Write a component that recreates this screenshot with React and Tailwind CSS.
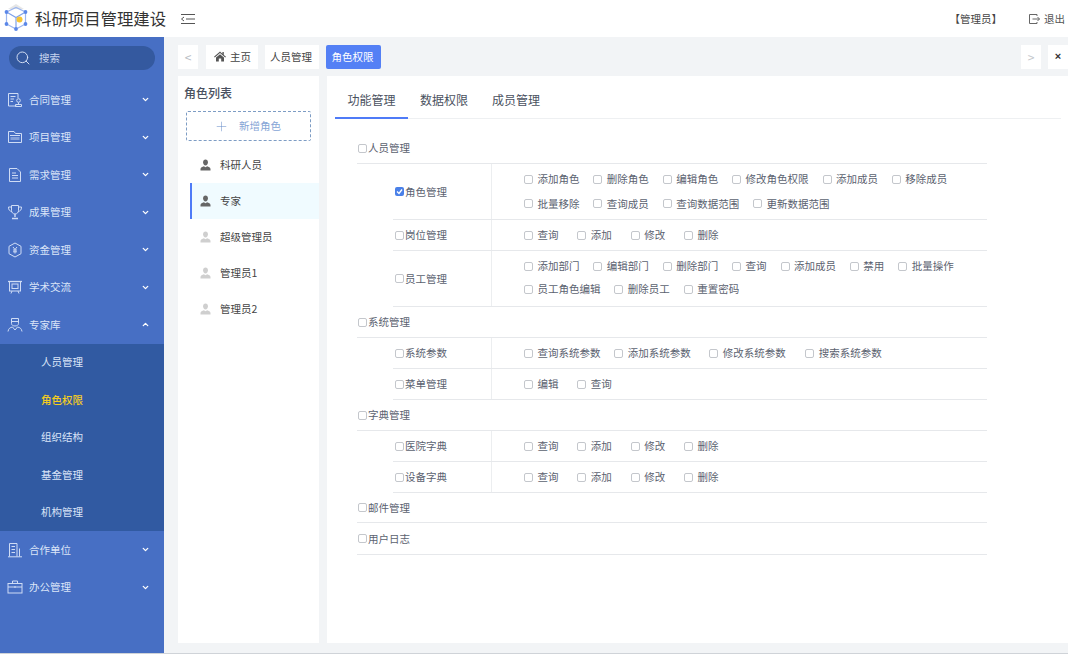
import React from 'react';
import { Search, ChevronDown, ChevronUp, Plus } from 'lucide-react';

const Stroke = ({ children }) => (
  <svg width="16" height="16" viewBox="0 0 16 16" fill="none" stroke="#cfdcf5" strokeWidth="1" className="shrink-0">
    {children}
  </svg>
);

const ContractIcon = () => (
  <Stroke>
    <path d="M9.5 14H1.5V1.5H11V6" />
    <path d="M3.5 4.5H8.5M3.5 7H7M3.5 9.5H6" />
    <circle cx="11.5" cy="8.5" r="1.8" />
    <path d="M11.5 10.5V12M8.5 14.5V12.5H14.5V14.5H8.5Z" />
  </Stroke>
);
const ProjectIcon = () => (
  <Stroke>
    <path d="M1.5 13.5V2.5H7L8.5 4.5H14.5V13.5H1.5Z" />
    <path d="M3 6.5H13" />
    <rect x="3.5" y="8" width="9" height="3" fill="#cfdcf5" fillOpacity="0.45" stroke="none" />
  </Stroke>
);
const DocIcon = () => (
  <Stroke>
    <path d="M2.5 1.5H10L13.5 5V14.5H2.5V1.5Z" />
    <path d="M5 6H9M5 8.5H11M5 11H11" />
  </Stroke>
);
const TrophyIcon = () => (
  <Stroke>
    <path d="M4.5 1.5H11.5V6.5C11.5 8.5 10 10 8 10C6 10 4.5 8.5 4.5 6.5V1.5Z" />
    <path d="M4.5 3H1.5C1.5 6 2.5 7 5 7.5M11.5 3H14.5C14.5 6 13.5 7 11 7.5" />
    <path d="M8 10V13M5 14.5H11" strokeWidth="1.4" />
  </Stroke>
);
const MoneyIcon = () => (
  <Stroke>
    <path d="M8 1L14 4.3V11.7L8 15L2 11.7V4.3L8 1Z" />
    <path d="M6 5L8 7.5L10 5M8 7.5V11.5M6 8H10M6 9.8H10" />
  </Stroke>
);
const BoardIcon = () => (
  <Stroke>
    <path d="M1 2.5H15" strokeWidth="1.3" />
    <rect x="2.5" y="2.5" width="11" height="9.5" />
    <rect x="5" y="5" width="6" height="4.5" />
    <path d="M5 12L4 14.5M11 12L12 14.5" />
  </Stroke>
);
const ExpertIcon = () => (
  <Stroke>
    <path d="M4.5 1.5H11.5V6.5C11.5 8 10 9 8 9C6 9 4.5 8 4.5 6.5V1.5Z" />
    <path d="M4.5 4.5H11.5" />
    <path d="M1 14.5C1.5 11.5 3 10.5 5.5 10L8 13L10.5 10C13 10.5 14.5 11.5 15 14.5" />
  </Stroke>
);
const BuildingIcon = () => (
  <Stroke>
    <path d="M2.5 14.5V1.5H10V14.5" />
    <path d="M4.5 4.5H8M4.5 7.5H8M4.5 10.5H8" />
    <path d="M12.5 6.5V14.5" />
    <path d="M1 14.8H15" />
  </Stroke>
);
const CaseIcon = () => (
  <Stroke>
    <rect x="1" y="4.5" width="14" height="9.5" />
    <path d="M5.5 4.5V2H10.5V4.5M1 8H15M8 7V9" />
  </Stroke>
);

const Logo = () => (
  <svg width="26" height="30" viewBox="0 0 26 30" className="shrink-0">
    <path d="M13 0L21 5H5L13 0Z" fill="#e6e6e6" />
    <path d="M3.5 8L13 3.5L22.5 8V20L13 25L3.5 20V8Z" fill="none" stroke="#9db7ef" strokeWidth="1.2" />
    <path d="M3.5 8L13 13.5L22.5 8M13 13.5V25" fill="none" stroke="#7fa2ea" strokeWidth="1.2" />
    <circle cx="16.5" cy="15.5" r="3" fill="#f6c433" />
    <circle cx="3.5" cy="8" r="1.9" fill="#5b87e8" />
    <circle cx="22.5" cy="8" r="1.9" fill="#5b87e8" />
    <circle cx="3.5" cy="20" r="1.9" fill="#5b87e8" />
    <circle cx="22.5" cy="20" r="1.9" fill="#5b87e8" />
    <circle cx="13" cy="25" r="1.9" fill="#5b87e8" />
  </svg>
);

const CollapseIcon = () => (
  <svg width="16" height="12" viewBox="0 0 16 12" fill="none" stroke="#555" strokeWidth="1">
    <path d="M1 1.5H15M6 6H15M1 10.5H15" />
    <path d="M4 4L1.5 6L4 8" />
  </svg>
);

const ExitIcon = () => (
  <svg width="12" height="12" viewBox="0 0 12 12" fill="none" stroke="#666" strokeWidth="1" className="shrink-0">
    <path d="M9 3V1.5H1.5V10.5H9V9" />
    <path d="M4.5 6H11.5M9.5 4L11.5 6L9.5 8" />
  </svg>
);

const HomeIcon = () => (
  <svg width="12" height="11" viewBox="0 0 12 11" fill="#555" className="shrink-0">
    <path d="M6 0.5L0 5.8L0.8 6.6L6 2L11.2 6.6L12 5.8L9.8 3.9V1H8.4V2.7L6 0.5Z" />
    <path d="M2 6.6L6 3.2L10 6.6V10.5H7.2V7.5H4.8V10.5H2V6.6Z" />
  </svg>
);

const PersonIcon = ({ color }) => (
  <svg width="11" height="12" viewBox="0 0 11 12" fill={color} className="shrink-0">
    <path d="M5.5 0.5C7 0.5 7.9 1.6 7.9 3.2C7.9 4.9 6.9 6.4 5.5 6.4C4.1 6.4 3.1 4.9 3.1 3.2C3.1 1.6 4 0.5 5.5 0.5Z" />
    <path d="M0.5 11.5V10C0.5 8.6 2.3 7.8 3.9 7.2L5.5 8.2L7.1 7.2C8.7 7.8 10.5 8.6 10.5 10V11.5H0.5Z" />
  </svg>
);

const menuBefore = [
  ['合同管理', ContractIcon],
  ['项目管理', ProjectIcon],
  ['需求管理', DocIcon],
  ['成果管理', TrophyIcon],
  ['资金管理', MoneyIcon],
  ['学术交流', BoardIcon],
];
const subMenu = ['人员管理', '角色权限', '组织结构', '基金管理', '机构管理'];
const menuAfter = [
  ['合作单位', BuildingIcon],
  ['办公管理', CaseIcon],
];

const MenuRow = ({ label, Icon, open }) => (
  <div className="flex h-[37.5px] items-center pl-[7px] pr-[14px] text-[10.5px] text-[#dbe5f8]">
    <Icon />
    <span className="ml-[6px] flex-1">{label}</span>
    {open ? <ChevronUp size={9} strokeWidth={3.5} color="#fff" /> : <ChevronDown size={9} strokeWidth={3.5} color="#fff" />}
  </div>
);

const Sidebar = () => (
  <aside className="flex w-[164px] shrink-0 flex-col bg-[#476fc4]">
    <div className="px-[9px] pt-[9px] pb-[11px]">
      <div className="flex h-[24px] items-center rounded-full bg-[#34599f] pl-[6px] text-[10.5px] text-[#c6d4ee]">
        <Search size={16} strokeWidth={1.4} color="#dbe5f8" />
        <span className="ml-[8px]">搜索</span>
      </div>
    </div>
    {menuBefore.map(([label, Icon]) => (
      <MenuRow key={label} label={label} Icon={Icon} />
    ))}
    <MenuRow label="专家库" Icon={ExpertIcon} open />
    <div className="bg-[#315aa2]">
      {subMenu.map((s) => (
        <div
          key={s}
          className={`flex h-[37.5px] items-center pl-[41px] text-[10.5px] ${s === '角色权限' ? 'font-medium text-[#f5cd1f]' : 'text-[#dbe5f8]'}`}
        >
          {s}
        </div>
      ))}
    </div>
    {menuAfter.map(([label, Icon]) => (
      <MenuRow key={label} label={label} Icon={Icon} />
    ))}
  </aside>
);

const Tab = ({ children, className = '' }) => (
  <div className={`flex h-[24px] items-center justify-center whitespace-nowrap text-[10.5px] ${className}`}>{children}</div>
);

const TabBar = () => (
  <div className="flex h-[39px] shrink-0 items-center bg-[#f2f4f6] pl-[14px]">
    <Tab className="w-[20px] bg-white text-[12px] text-[#b9bdc4]">&lt;</Tab>
    <Tab className="ml-[8px] w-[52px] gap-[4px] bg-white pl-px text-[#444]">
      <HomeIcon />
      主页
    </Tab>
    <Tab className="ml-[7px] w-[54px] bg-white pr-[2px] text-[#444]">人员管理</Tab>
    <Tab className="ml-[7px] w-[55px] rounded-[2px] bg-[#5480f5] pr-[2px] text-white">角色权限</Tab>
    <div className="flex-1" />
    <Tab className="w-[20px] bg-white text-[12px] text-[#c4c7cc]">&gt;</Tab>
    <Tab className="ml-[7px] w-[20px] bg-white font-['Liberation_Sans'] text-[11px] font-bold text-[#333]">×</Tab>
  </div>
);

const roles = [
  ['科研人员', '#666', false],
  ['专家', '#666', true],
  ['超级管理员', '#cfcfcf', false],
  ['管理员1', '#cfcfcf', false],
  ['管理员2', '#cfcfcf', false],
];

const RolePanel = () => (
  <section className="flex w-[141px] shrink-0 flex-col bg-white">
    <h2 className="pl-[6px] pt-[8px] text-[12px] leading-[17px] font-medium text-[#4a5160]">角色列表</h2>
    <div className="mx-[8px] mt-[10px] flex h-[30px] items-center justify-center rounded-[2px] border border-dashed border-[#7d9cc4] pr-[2px] text-[10.5px] text-[#86a5d6]">
      <Plus size={15} strokeWidth={0.9} color="#6f93cc" />
      <span className="ml-[10px]">新增角色</span>
    </div>
    <div className="mt-[6px] pl-[12px]">
      {roles.map(([name, color, active]) => (
        <div
          key={name}
          className={`flex h-[36px] items-center border-l-2 pb-px pl-[8px] text-[10.5px] text-[#444] ${active ? 'border-[#4f7bf7] bg-[#f0fbff]' : 'border-transparent'}`}
        >
          <PersonIcon color={color} />
          <span className="ml-[9px]">{name}</span>
        </div>
      ))}
    </div>
  </section>
);

const Box = ({ checked }) =>
  checked ? (
    <span className="flex h-[9px] w-[9px] shrink-0 items-center justify-center rounded-[2px] bg-[#4a80e8]">
      <svg width="7" height="7" viewBox="0 0 7 7" fill="none" stroke="#fff" strokeWidth="1.3">
        <path d="M1 3.5L3 5.5L6 1.5" />
      </svg>
    </span>
  ) : (
    <span className="h-[9px] w-[9px] shrink-0 rounded-[2px] border border-[#c4c7cc] bg-white" />
  );

const Perm = ({ label, gap }) => (
  <span className={`flex items-center ${gap}`}>
    <Box />
    <span className="ml-[4.4px] text-[10.5px] leading-[14px] text-[#5b6270]">{label}</span>
  </span>
);

const Label = ({ text, checked }) => (
  <span className="flex items-center text-[10.5px] text-[#5b6270]">
    <Box checked={checked} />
    <span className="ml-px">{text}</span>
  </span>
);

const Group = ({ text, height = 'h-[31px]' }) => (
  <div className={`flex items-center border-b border-[#e6e8eb] pl-px ${height}`}>
    <Label text={text} />
  </div>
);

const Sub = ({ text, checked, height, rows = '', perms, gap = 'mr-[14px]', gaps }) => (
  <div className={`ml-[36px] flex border-b border-[#e6e8eb] ${height}`}>
    <div className="flex w-[99px] shrink-0 items-center border-r border-[#eceef0] pl-[2px]">
      <Label text={text} checked={checked} />
    </div>
    <div className={`flex flex-1 flex-wrap content-center items-center pl-[32px] ${rows}`}>
      {perms.map((p, i) => (
        <Perm key={p} label={p} gap={gaps ? gaps[i] : gap} />
      ))}
    </div>
  </div>
);

const crud = ['查询', '添加', '修改', '删除'];

const Tree = () => (
  <div className="mt-[14px] ml-[30px] w-[630px]">
    <Group text="人员管理" />
    <Sub
      text="角色管理"
      checked
      height="h-[56px]"
      rows="gap-y-[10.5px]"
      perms={['添加角色', '删除角色', '编辑角色', '修改角色权限', '添加成员', '移除成员', '批量移除', '查询成员', '查询数据范围', '更新数据范围']}
    />
    <Sub text="岗位管理" height="h-[31px]" perms={crud} gap="mr-[19px]" />
    <Sub
      text="员工管理"
      height="h-[56px]"
      rows="gap-y-[9px] pb-[2px]"
      perms={['添加部门', '编辑部门', '删除部门', '查询', '添加成员', '禁用', '批量操作', '员工角色编辑', '删除员工', '重置密码']}
    />
    <Group text="系统管理" />
    <Sub
      text="系统参数"
      height="h-[31px]"
      perms={['查询系统参数', '添加系统参数', '修改系统参数', '搜索系统参数']}
      gaps={['mr-[14px]', 'mr-[18.6px]', 'mr-[19.6px]', 'mr-[14px]']}
    />
    <Sub text="菜单管理" height="h-[31px]" perms={['编辑', '查询']} gap="mr-[19px]" />
    <Group text="字典管理" />
    <Sub text="医院字典" height="h-[31px]" perms={crud} gap="mr-[19px]" />
    <Sub text="设备字典" height="h-[31px]" perms={crud} gap="mr-[19px]" />
    <Group text="邮件管理" height="h-[30px]" />
    <Group text="用户日志" height="h-[32px]" />
  </div>
);

const PermPanel = () => (
  <section className="flex-1 bg-white">
    <div className="ml-[8px] mr-[7px] flex h-[43px] border-b border-[#eef0f2] text-[12px] text-[#4a5160]">
      <div className="flex h-[43px] w-[73px] items-center justify-center whitespace-nowrap border-b-2 border-[#4f7bf7] pt-[6px]">功能管理</div>
      <div className="ml-[12px] flex h-[43px] w-[48px] items-center justify-center whitespace-nowrap border-b-2 border-transparent pt-[6px]">数据权限</div>
      <div className="ml-[24px] flex h-[43px] w-[48px] items-center justify-center whitespace-nowrap border-b-2 border-transparent pt-[6px]">成员管理</div>
    </div>
    <Tree />
  </section>
);

export default function App() {
  return (
    <div
      className="flex h-[654px] w-[1068px] flex-col overflow-hidden border-b border-[#cfd3d8] bg-[#f2f4f6]"
      style={{ fontFamily: '"Noto Sans CJK SC", "Liberation Sans", sans-serif' }}
    >
      <header className="flex h-[37px] shrink-0 items-center bg-white pl-[3px]">
        <Logo />
        <h1 className="ml-[6px] text-[16.4px] font-normal text-[#333]">科研项目管理建设</h1>
        <span className="ml-[14px] flex">
          <CollapseIcon />
        </span>
        <div className="flex-1" />
        <span className="text-[10.5px] text-[#444]">【管理员】</span>
        <span className="ml-[26px] mr-[3px] flex items-center text-[10.5px] text-[#555]">
          <ExitIcon />
          <span className="ml-[4px]">退出</span>
        </span>
      </header>
      <div className="flex min-h-0 flex-1">
        <Sidebar />
        <div className="flex min-w-0 flex-1 flex-col">
          <TabBar />
          <div className="flex h-[567px] gap-[8px] pl-[14px]">
            <RolePanel />
            <PermPanel />
          </div>
        </div>
      </div>
    </div>
  );
}
